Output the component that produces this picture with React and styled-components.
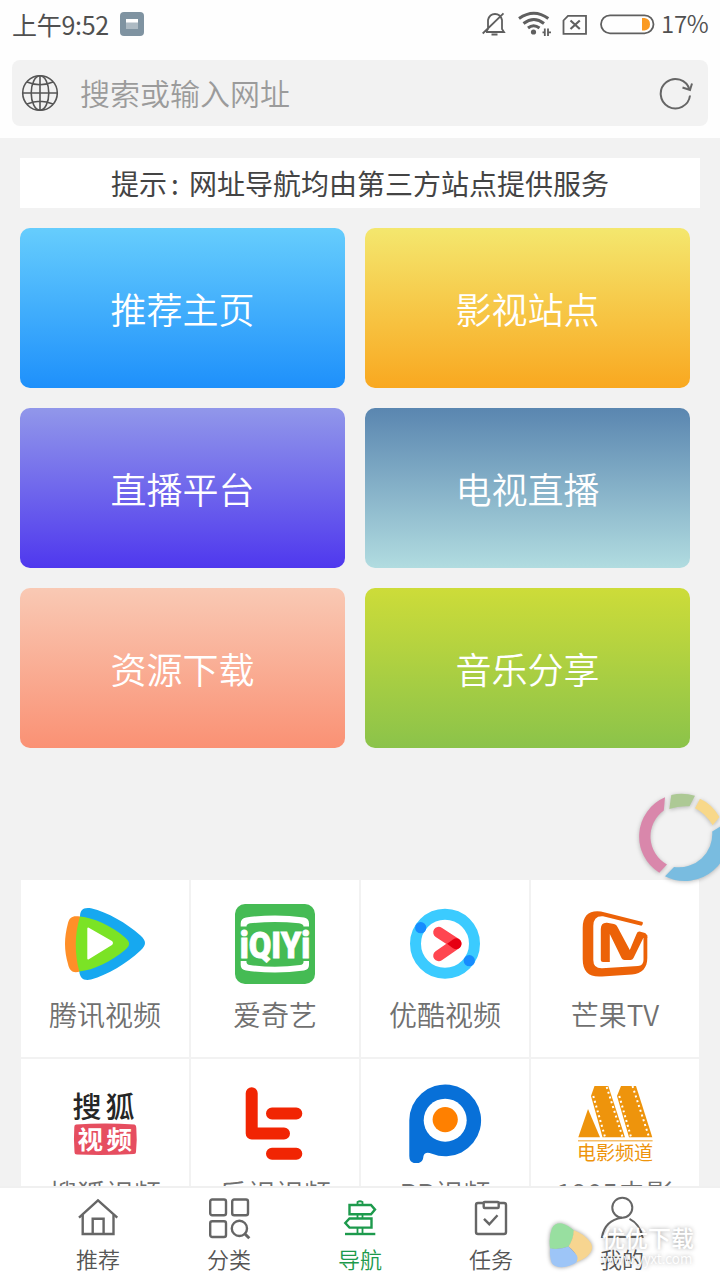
import styled, { createGlobalStyle } from "styled-components";

const tiles = [
  { text: "推荐主页", from: "#66cdfd", to: "#1e90fb" },
  { text: "影视站点", from: "#f4e76e", to: "#f9a820" },
  { text: "直播平台", from: "#9197ea", to: "#4f38ee" },
  { text: "电视直播", from: "#5a86b0", to: "#b1dce0" },
  { text: "资源下载", from: "#f9c9b4", to: "#fa9174" },
  { text: "音乐分享", from: "#cddc39", to: "#8bc34a" },
];

const TencentLogo = () => (
  <svg viewBox="0 0 80 80">
    <path
      d="M15 12.6C8 11.2 4.5 13 3 19C-1 34 -1 46 3 60C4.5 67 8 69.5 15 67.5Z"
      fill="#ff8f28"
    />
    <path
      d="M15 12.6C15 6 18 3 26 4.2C43 8.5 61 18.5 75.5 31.5C81.5 37 81.5 41 75.5 46.5C61 60 43 70.5 26 75.6C18 77 15 74 14.3 67.5Z"
      fill="#16a8f0"
    />
    <path
      d="M15 12.6C29 14 46 21.5 60 33.5C65.5 38 65.5 41.5 60 46C46 57.5 29 66 14.3 67.5C9.5 50 9.5 30 15 12.6Z"
      fill="#7be325"
    />
    <path
      d="M23.3 24.5L46 37.5Q48 39 46 40.5L23.3 54.5Z"
      fill="#fff"
      stroke="#fff"
      strokeWidth="2"
      strokeLinejoin="round"
    />
  </svg>
);

const IqiyiLogo = () => (
  <svg viewBox="0 0 80 80">
    <rect width="80" height="80" rx="10" fill="#45bb54" />
    <path
      d="M5.7 22.5V19.5Q5.7 14.5 11 13.5Q40 9.5 69 13.5Q74 14.5 74 19.5V22.5H68.5Q68.5 20 64 19.3Q40 16.5 15 19.3Q11.5 20 11.5 22.5Z"
      fill="#fff"
    />
    <path
      d="M5.7 57V61Q5.7 65.5 11 66.5Q40 70.5 69 66.5Q74 65.5 74 61V57H68.5Q69 60.5 65 61Q40 64.5 15 61Q11 60.5 11.5 57Z"
      fill="#fff"
    />
    <text
      transform="translate(4.7 53.8) scale(0.66 1)"
      fontFamily="Roboto, 'Liberation Sans', sans-serif"
      fontSize="37.5"
      fontWeight="900"
      fill="#fff"
      stroke="#fff"
      strokeWidth="0.8"
      textLength="107"
      lengthAdjust="spacingAndGlyphs"
    >
      iQIYi
    </text>
  </svg>
);

const YoukuLogo = () => (
  <svg viewBox="0 0 80 80" fill="none" strokeLinecap="round">
    <circle cx="40" cy="39.7" r="29.5" stroke="#3bcbff" strokeWidth="11" />
    <circle cx="15.7" cy="23.7" r="5.6" fill="#168cff" />
    <circle cx="64.3" cy="56.7" r="5.6" fill="#168cff" />
    <path d="M33.7 28.3L51 39.7L33.7 51.7" stroke="#ff4650" strokeWidth="11" strokeLinejoin="round" />
    <path d="M42 39.8L48 35.4Q52 33 55 36Q58 39.7 55 43.5Q52 46.4 48 44.2Z" fill="#e60012" />
  </svg>
);

const MangoLogo = () => (
  <svg viewBox="0 0 80 80" fill="#ec6208">
    <path d="M67.7 18L30 8.4C16 5 7.7 10 7.7 24V55C7.7 68 14 73.5 27 72.5L57 70.5C67 69.5 72.3 64 72.3 54V31H68.5V56Q68.5 61.5 63 62L27 64.3Q18.3 64.5 18.3 56V22Q18.3 11.5 28 12.2L66.5 21.7Q68.5 20 67.7 18Z" />
    <path d="M25.8 56V25Q26 18.2 32 18.7L39 20Q41.5 20.5 42.5 23L54.8 46L61.5 30Q62.5 27 65.5 27.7L70 29Q72.3 30 72.3 34L68.3 34L58.5 54Q57.5 56 55.5 56H49.5Q47.5 56 46.5 54L34.8 30V58H28Q25.8 58 25.8 56Z" />
  </svg>
);

const SohuLogo = () => (
  <svg viewBox="0 0 80 80" fontFamily="'Noto Sans CJK SC', sans-serif">
    <text x="7.5" y="34.5" fontSize="29" fontWeight="500" letterSpacing="4" fill="#262626">
      搜狐
    </text>
    <path
      d="M11 41.5Q40 39.5 69.5 41.5Q71.5 42 71.3 45Q72.3 57 71 69Q71 71 69 71Q40 72.5 12 71.5Q9.5 71.5 9.5 69Q8.5 56 9.3 44Q9.3 41.5 11 41.5Z"
      fill="#e64e60"
    />
    <text x="12.5" y="66" fontSize="25.5" fontWeight="700" letterSpacing="3.5" fill="#fff">
      视频
    </text>
  </svg>
);

const LeLogo = () => (
  <svg viewBox="0 0 80 80" fill="none" stroke="#f12503" strokeWidth="12" strokeLinecap="round" strokeLinejoin="round">
    <path d="M16.7 10.3V50.5H49M37 30.5H61.3M37 70.7H61.3" />
  </svg>
);

const PpLogo = () => (
  <svg viewBox="0 0 80 80">
    <path
      d="M4.3 37.3A35.9 35.9 0 1 1 27 70.8Q20 68 18.5 73Q18 80.3 11.3 80.3Q4.3 80.3 4.3 73Z"
      fill="#0870d8"
    />
    <circle cx="40.2" cy="37.2" r="21.5" fill="#fff" />
    <circle cx="40.2" cy="36.6" r="12.6" fill="#ff8000" />
  </svg>
);

const MovieLogo = () => (
  <svg viewBox="0 0 80 80" fill="#ee940c">
    <path d="M13 26L3.3 54.3H25Z" />
    <path d="M19.5 3H33.3L50 54.3H27.5L16 13Z" />
    <path d="M46 3H61L77.3 54.3H54L42 13Z" />
    <g stroke="#fff" strokeWidth="2" strokeDasharray="2 3">
      <path d="M18.3 13L30 54M31.7 4L47.5 54M44.3 13L56 54M57.5 3L74 54" />
    </g>
    <path d="M3 57H77.6V58.6H3Z" fill="#f5bd69" />
    <text x="2" y="77.2" fontSize="19" fontWeight="400" fontFamily="'Noto Sans CJK SC', sans-serif">
      电影频道
    </text>
  </svg>
);

const sites = [
  { name: "腾讯视频", logo: <TencentLogo /> },
  { name: "爱奇艺", logo: <IqiyiLogo /> },
  { name: "优酷视频", logo: <YoukuLogo /> },
  { name: "芒果TV", logo: <MangoLogo /> },
  { name: "搜狐视频", logo: <SohuLogo /> },
  { name: "乐视视频", logo: <LeLogo /> },
  { name: "PP视频", logo: <PpLogo /> },
  { name: "1905电影", logo: <MovieLogo /> },
];

const tabs = [
  {
    name: "推荐",
    icon: (
      <>
        <path d="M3 21.6L22 4.3L41.3 21.6" />
        <path d="M6.7 19V38H37.5V19" />
        <path d="M16.7 38V22.8H27.6V38" />
      </>
    ),
  },
  {
    name: "分类",
    icon: (
      <>
        <rect x="3.2" y="3.5" width="15.8" height="15.8" rx="2" />
        <rect x="25.2" y="3.5" width="15.8" height="15.8" rx="2" />
        <rect x="3.2" y="25.2" width="15.8" height="15.8" rx="2" />
        <circle cx="32.4" cy="32.4" r="7.6" />
        <path d="M37.5 37.5L42.3 42.3" strokeWidth="3" />
      </>
    ),
  },
  {
    name: "导航",
    active: true,
    icon: (
      <>
        <path d="M11.5 9H33L37 13.6L33 18.3H11.5Z" />
        <path d="M33.5 22.5H11.5L7.3 27L11.5 31.6H33.5Z" />
        <path
          d="M19.5 9V6Q22 4.5 24.5 6V9M19.5 18.3V22.5M24.5 18.3V22.5M19.5 31.6V38M24.5 31.6V38"
          strokeWidth="1.8"
        />
        <path d="M7 38H37.3" />
      </>
    ),
  },
  {
    name: "任务",
    icon: (
      <>
        <path d="M14.5 7H9Q7 7 7 9V36Q7 38 9 38H35Q37 38 37 36V9Q37 7 35 7H29.5" />
        <rect x="14.7" y="6" width="15" height="6" rx="1" />
        <path d="M15 22.8L20.3 28.2L28.5 19.3" />
      </>
    ),
  },
  {
    name: "我的",
    icon: (
      <>
        <circle cx="22.3" cy="11.7" r="10" strokeWidth="2" />
        <path d="M22 21.7Q5 24 2 41H42.5Q40 28 29.5 22.8" strokeWidth="2" />
      </>
    ),
  },
];

const App = () => {
  return (
    <>
      <GlobalStyle />
      <Page>
        <StatusBar>
          <Clock>上午9:52</Clock>
          <svg width="24" height="24" viewBox="0 0 24 24">
            <rect width="24" height="24" rx="4" fill="#7f93a1" />
            <path d="M6 7H18V17H6Z" fill="#adbac3" />
            <path d="M6 7H18V10.5H6Z" fill="#fff" />
          </svg>
          <StatusIcons>
            <svg width="176" height="26" viewBox="0 0 176 26" fill="none" stroke="#5f5f5f" strokeWidth="1.8">
              <path d="M4 21H22L20 18V9Q18.5 3 13 3Q7.5 3 6 9V18L4 21M0.7 22.5L21.5 2.3M9.5 23.5H15.5" />
              <path d="M37 7.5Q52 -3 66.3 7.5M41.5 12.5Q52 4.5 62 12.5" strokeWidth="3" />
              <path d="M46 17Q51.5 12.5 57.5 17" strokeWidth="3" />
              <circle cx="51.5" cy="21" r="2.6" fill="#5f5f5f" stroke="none" />
              <path d="M62.8 17.5V25M66 17.5V25M60.5 21.3H62.5M66.5 21.3H69" />
              <path d="M86 4.8H104V22.8H81.5V9.5Z" />
              <path d="M88.5 9.5L97.8 18M97.8 9.5L88.5 18" strokeWidth="2.2" />
              <rect x="119" y="4.3" width="52.5" height="18" rx="9" />
              <path d="M160 7H162.5Q168 8 168 13.2Q168 18.5 162.5 19.5H160Z" fill="#fa9a22" stroke="none" />
            </svg>
            <Percent>17%</Percent>
          </StatusIcons>
        </StatusBar>
        <SearchBar>
          <SearchBox>
            <svg width="38" height="38" viewBox="0 0 38 38" fill="none" stroke="#555" strokeWidth="1.6">
              <circle cx="19" cy="19" r="17.3" />
              <ellipse cx="19" cy="19" rx="8.8" ry="17.3" />
              <path d="M19 1.7V36.3M1.7 19H36.3M6 8Q19 13.5 32 8M6 30Q19 24.5 32 30" />
            </svg>
            <p>搜索或输入网址</p>
            <svg width="34" height="34" viewBox="0 0 34 34" fill="none" stroke="#666" strokeWidth="2">
              <path d="M31 19.5A14.7 14.7 0 1 1 30.5 13.5" />
              <path d="M23.5 11.5L31 14L33 7.5" />
            </svg>
          </SearchBox>
        </SearchBar>
        <Content>
          <Notice>
            提示<i>:</i>网址导航均由第三方站点提供服务
          </Notice>
          <Tiles>
            {tiles.map((tile) => (
              <Tile key={tile.text} $from={tile.from} $to={tile.to}>
                {tile.text}
              </Tile>
            ))}
          </Tiles>
          <Sites>
            {sites.map((site) => (
              <Site key={site.name}>
                {site.logo}
                <p>{site.name}</p>
              </Site>
            ))}
          </Sites>
        </Content>
        <TabBar>
          {tabs.map((tab) => (
            <Tab key={tab.name} $active={tab.active}>
              <svg viewBox="0 0 44 44">{tab.icon}</svg>
              <span>{tab.name}</span>
            </Tab>
          ))}
        </TabBar>
        <FloatRing viewBox="0 0 90 92">
          <path d="M28 5.3A42.6 42.6 0 0 0 22.3 80.7L30 72.5A32 32 0 0 1 26.8 18.5Z" fill="#d987ab" />
          <path d="M34.3 3Q46 0.2 58 3.7L52.5 14.3Q42 13.5 32.3 17Z" fill="#adc995" />
          <path d="M63 6.7Q75 12 82.5 25L75.7 33.2Q68 21 58 16.3Z" fill="#f8d88a" />
          <path d="M89 31A43.5 43.5 0 0 1 28 84.2L37 75A33.5 33.5 0 0 0 75.2 39.5Z" fill="#79bce0" />
        </FloatRing>
        <Watermark>
          <svg width="52" height="54" viewBox="0 0 52 54">
            <path d="M5 30.5Q3.5 18 7 10.3Q10 4.5 17 5.5Q23 7 29 12.5Q28.5 21 23.8 28.5Q14 32 5 30.5Z" fill="#98dfa0" />
            <path d="M28.7 12.3Q40 16 46 25.3Q48.5 30 45.5 34.5Q41 41 31.5 44Q33 35 23.5 28.5Q28.5 21 28.7 12.3Z" fill="#f7d590" />
            <path d="M5 30.5Q15 32 23.5 28.5Q29 34 32 37.5Q33.5 42 30.5 45Q25 48.5 16.7 49.3Q9 49 6.7 45Q4.5 39 5 30.5Z" fill="#9dc5f7" />
          </svg>
          <div>
            <b>优优下载</b>
            <small>www.yyxt.com</small>
          </div>
        </Watermark>
      </Page>
    </>
  );
};

const GlobalStyle = createGlobalStyle`
  * {
    margin: 0;
    padding: 0;
    box-sizing: border-box;
  }
  body {
    font-family: "Noto Sans CJK SC", sans-serif;
    font-weight: 350;
    overflow: hidden;
  }
  svg {
    display: block;
    flex-shrink: 0;
  }
`;

const Page = styled.div`
  position: relative;
  width: 720px;
  height: 1280px;
  display: flex;
  flex-direction: column;
  overflow: hidden;
  background: #f2f2f2;
`;

const StatusBar = styled.div`
  height: 48px;
  flex-shrink: 0;
  display: flex;
  align-items: center;
  padding: 0 12px;
  background: #fefefe;
  color: #505050;
`;

const Clock = styled.div`
  width: 108px;
  font-size: 25px;
  font-weight: 400;
  line-height: 46px;
  letter-spacing: -0.3px;
  white-space: nowrap;
`;

const StatusIcons = styled.div`
  display: flex;
  align-items: center;
  margin-left: auto;
`;

const Percent = styled.div`
  width: 47px;
  margin-left: 3px;
  padding-bottom: 2px;
  font-size: 24px;
  line-height: 46px;
  letter-spacing: -0.3px;
  white-space: nowrap;
`;

const SearchBar = styled.div`
  height: 90px;
  flex-shrink: 0;
  padding: 12px;
  background: #fefefe;
`;

const SearchBox = styled.div`
  height: 66px;
  display: flex;
  align-items: center;
  padding: 0 15px 0 9px;
  border-radius: 8px;
  background: #f2f2f2;
  p {
    flex: 1;
    margin-left: 21px;
    padding-bottom: 3px;
    color: #9b9b9b;
    font-size: 30px;
    line-height: 44px;
  }
`;

const Content = styled.div`
  flex: 1;
  min-height: 0;
  overflow: hidden;
  padding: 20px 20px 0;
`;

const Notice = styled.div`
  height: 50px;
  background: #fff;
  color: #444;
  font-size: 28px;
  font-weight: 400;
  line-height: 50px;
  text-align: center;
  i {
    margin: 0 10px 0 4px;
    font-style: normal;
  }
`;

const Tiles = styled.div`
  display: grid;
  grid-template-columns: 325px 325px;
  grid-auto-rows: 160px;
  gap: 20px;
  margin-top: 20px;
`;

const Tile = styled.div`
  display: flex;
  justify-content: center;
  align-items: center;
  border-radius: 10px;
  background: linear-gradient(${(props) => props.$from}, ${(props) => props.$to});
  color: #fff;
  font-size: 36px;
`;

const Sites = styled.div`
  display: grid;
  grid-template-columns: repeat(4, 168px);
  grid-auto-rows: 177px;
  gap: 2px;
  margin: 132px 1px 0;
`;

const Site = styled.div`
  display: flex;
  flex-direction: column;
  align-items: center;
  padding-top: 24px;
  background: #fff;
  color: #707070;
  svg {
    width: 80px;
    height: 80px;
  }
  p {
    margin-top: 10px;
    font-size: 28px;
    line-height: 40px;
  }
`;

const TabBar = styled.div`
  height: 94px;
  flex-shrink: 0;
  display: grid;
  grid-template-columns: repeat(5, 131px);
  justify-content: center;
  border-top: 2px solid #f0f0f0;
  background: #fff;
`;

const Tab = styled.div`
  display: flex;
  flex-direction: column;
  align-items: center;
  padding-top: 8px;
  color: ${(props) => (props.$active ? "#1d9a4c" : "#555")};
  font-size: 22px;
  line-height: 32px;
  svg {
    width: 44px;
    height: 44px;
    margin-bottom: 2px;
    fill: none;
    stroke: ${(props) => (props.$active ? "#1d9a4c" : "#666")};
    stroke-width: 2.4;
  }
`;

const FloatRing = styled.svg`
  position: absolute;
  left: 637px;
  top: 792px;
  width: 90px;
  height: 92px;
  filter: drop-shadow(0 1px 2px rgba(0, 0, 0, 0.25));
`;

const Watermark = styled.div`
  position: absolute;
  left: 545px;
  top: 1218px;
  display: flex;
  svg {
    filter: drop-shadow(0 0 2px rgba(0, 0, 0, 0.4));
  }
  div {
    display: flex;
    flex-direction: column;
    margin: 5px 0 0 5px;
    color: #fff;
    text-shadow: 0 0 4px rgba(0, 0, 0, 0.35);
  }
  b {
    font-size: 23px;
    font-weight: 500;
    line-height: 28px;
  }
  small {
    font-size: 13.5px;
    line-height: 14px;
  }
`;

export default App;
